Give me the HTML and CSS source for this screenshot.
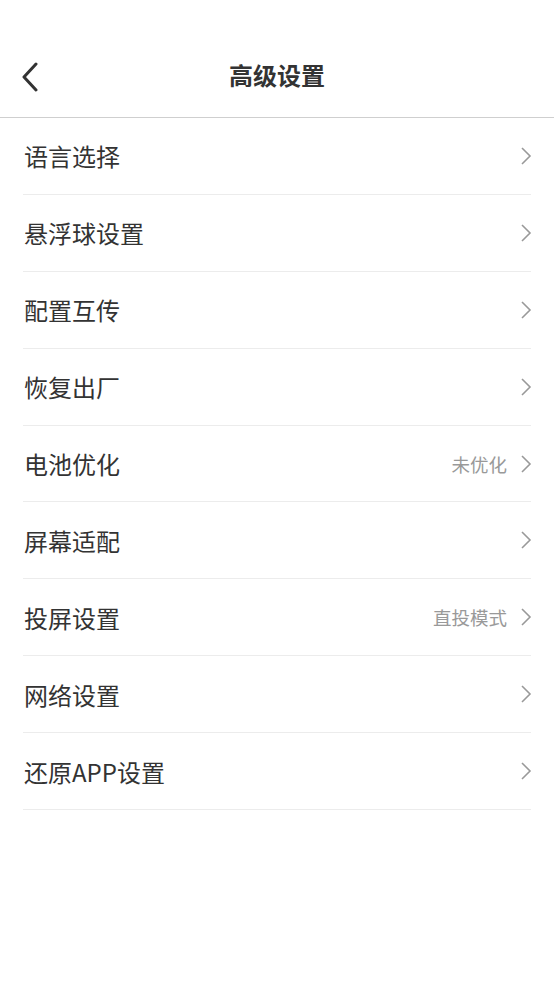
FILE: index.html
```html
<!DOCTYPE html>
<html lang="zh-CN">
<head>
<meta charset="utf-8">
<link rel="stylesheet" href="styles.css">
</head>
<body>
<div class="page">
  <header class="nav">
    <span class="back">
      <svg width="18" height="30" viewBox="0 0 18 30"><path d="M15 2 L3 15 L15 28" fill="none" stroke="#333" stroke-width="3" stroke-linecap="round" stroke-linejoin="round"/></svg>
    </span>
    <h1 class="title">高级设置</h1>
  </header>
  <ul class="list">
    <li class="row"><span class="label">语言选择</span><span class="right"><svg class="chev" width="12" height="20" viewBox="0 0 12 20"><path d="M2 2 L10 10 L2 18" fill="none" stroke="#999" stroke-width="1.6"/></svg></span></li>
    <li class="row"><span class="label">悬浮球设置</span><span class="right"><svg class="chev" width="12" height="20" viewBox="0 0 12 20"><path d="M2 2 L10 10 L2 18" fill="none" stroke="#999" stroke-width="1.6"/></svg></span></li>
    <li class="row"><span class="label">配置互传</span><span class="right"><svg class="chev" width="12" height="20" viewBox="0 0 12 20"><path d="M2 2 L10 10 L2 18" fill="none" stroke="#999" stroke-width="1.6"/></svg></span></li>
    <li class="row"><span class="label">恢复出厂</span><span class="right"><svg class="chev" width="12" height="20" viewBox="0 0 12 20"><path d="M2 2 L10 10 L2 18" fill="none" stroke="#999" stroke-width="1.6"/></svg></span></li>
    <li class="row"><span class="label">电池优化</span><span class="right"><span class="value">未优化</span><svg class="chev" width="12" height="20" viewBox="0 0 12 20"><path d="M2 2 L10 10 L2 18" fill="none" stroke="#999" stroke-width="1.6"/></svg></span></li>
    <li class="row"><span class="label">屏幕适配</span><span class="right"><svg class="chev" width="12" height="20" viewBox="0 0 12 20"><path d="M2 2 L10 10 L2 18" fill="none" stroke="#999" stroke-width="1.6"/></svg></span></li>
    <li class="row"><span class="label">投屏设置</span><span class="right"><span class="value">直投模式</span><svg class="chev" width="12" height="20" viewBox="0 0 12 20"><path d="M2 2 L10 10 L2 18" fill="none" stroke="#999" stroke-width="1.6"/></svg></span></li>
    <li class="row"><span class="label">网络设置</span><span class="right"><svg class="chev" width="12" height="20" viewBox="0 0 12 20"><path d="M2 2 L10 10 L2 18" fill="none" stroke="#999" stroke-width="1.6"/></svg></span></li>
    <li class="row"><span class="label">还原APP设置</span><span class="right"><svg class="chev" width="12" height="20" viewBox="0 0 12 20"><path d="M2 2 L10 10 L2 18" fill="none" stroke="#999" stroke-width="1.6"/></svg></span></li>
  </ul>
</div>
</body>
</html>
```

FILE: styles.css
```css
* { box-sizing: border-box; }
html, body { margin: 0; padding: 0; background: #fff; }
body {
  font-family: "Noto Sans CJK SC", "Noto Sans", sans-serif;
  color: #333;
}
.page { width: 554px; }
.nav {
  position: relative;
  height: 118px;
  padding-top: 36px;
  border-bottom: 1px solid #cfcfcf;
  display: flex;
  justify-content: center;
}
.back {
  position: absolute;
  left: 21px;
  top: 62px;
  display: block;
  line-height: 0;
}
.title {
  margin: 0;
  height: 78px;
  line-height: 78px;
  font-size: 24px;
  font-weight: 700;
  color: #333;
}
.list {
  list-style: none;
  margin: 0;
  padding: 0 23px;
}
.row {
  height: 76.9px;
  display: flex;
  align-items: center;
  justify-content: space-between;
  border-bottom: 1px solid #ececec;
}
.label {
  font-size: 24px;
  color: #333;
  padding-left: 1px;
}
.right {
  display: flex;
  align-items: center;
  gap: 13px;
}
.value {
  font-size: 18.5px;
  color: #999;
}
.chev { display: block; margin-right: -1px; }
```
